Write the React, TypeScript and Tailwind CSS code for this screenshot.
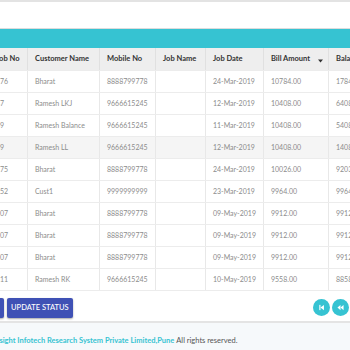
import React from 'react';

interface Row {
  jobNo: string;
  customer: string;
  mobile: string;
  jobName: string;
  jobDate: string;
  bill: string;
  balance: string;
}

const rows: Row[] = [
  { jobNo: '176', customer: 'Bharat', mobile: '8888799778', jobName: '', jobDate: '24-Mar-2019', bill: '10784.00', balance: '1784.00' },
  { jobNo: '47', customer: 'Ramesh LKJ', mobile: '9666615245', jobName: '', jobDate: '12-Mar-2019', bill: '10408.00', balance: '6408.00' },
  { jobNo: '49', customer: 'Ramesh Balance', mobile: '9666615245', jobName: '', jobDate: '11-Mar-2019', bill: '10408.00', balance: '5408.00' },
  { jobNo: '39', customer: 'Ramesh LL', mobile: '9666615245', jobName: '', jobDate: '12-Mar-2019', bill: '10408.00', balance: '1408.00' },
  { jobNo: '175', customer: 'Bharat', mobile: '8888799778', jobName: '', jobDate: '24-Mar-2019', bill: '10026.00', balance: '9203.00' },
  { jobNo: '152', customer: 'Cust1', mobile: '9999999999', jobName: '', jobDate: '23-Mar-2019', bill: '9964.00', balance: '9964.00' },
  { jobNo: '107', customer: 'Bharat', mobile: '8888799778', jobName: '', jobDate: '09-May-2019', bill: '9912.00', balance: '9912.00' },
  { jobNo: '107', customer: 'Bharat', mobile: '8888799778', jobName: '', jobDate: '09-May-2019', bill: '9912.00', balance: '9912.00' },
  { jobNo: '107', customer: 'Bharat', mobile: '8888799778', jobName: '', jobDate: '09-May-2019', bill: '9912.00', balance: '9912.00' },
  { jobNo: '111', customer: 'Ramesh RK', mobile: '9666615245', jobName: '', jobDate: '10-May-2019', bill: '9558.00', balance: '8858.00' },
];

const cols = 'grid grid-cols-[39px_72px_56px_50px_58px_65px_60px]';

const App: React.FC = () => {
  return (
    <div className="w-[350px] h-[350px] overflow-hidden bg-white font-['Lato',sans-serif] text-[7px] whitespace-nowrap">
      <div className="h-[2px] bg-[#e3e3e3]" />
      <div className="h-[26px] bg-white" />
      <div className="h-px bg-[#dcdcdc]" />
      <div className="h-[19px] bg-[#36c3d2]" />

      {/* table */}
      <div className="ml-[-11px] w-[400px]">
        <div className={`${cols} h-[22px] bg-[#eeeeee] text-[#333] font-bold text-[7.5px]`}>
          {['Job No', 'Customer Name', 'Mobile No', 'Job Name', 'Job Date', 'Bill Amount', 'Balance'].map((h, i) => (
            <div key={h} className="flex items-center pl-[7px] pr-[5px] border-r border-[#e0e0e0]">
              <span>{h}</span>
              {i === 5 && (
                <svg width="5" height="4" viewBox="0 0 5 4" className="ml-auto mt-[3px]">
                  <path d="M0 0.5 L5 0.5 L2.5 3.5 Z" fill="#333" />
                </svg>
              )}
            </div>
          ))}
        </div>
        {rows.map((r, idx) => (
          <div
            key={idx}
            className={`${cols} h-[22px] text-[#8c8c8c] border-t border-[#ececec] ${idx === 3 ? 'bg-[#f5f5f5]' : 'bg-white'}`}
          >
            {[r.jobNo, r.customer, r.mobile, r.jobName, r.jobDate, r.bill, r.balance].map((c, i) => (
              <div key={i} className="flex items-center px-[7px] border-r border-[#e8e8e8]">
                {c}
              </div>
            ))}
          </div>
        ))}
        <div className="h-px bg-[#ececec]" />
      </div>

      {/* actions */}
      <div className="flex items-center h-[30px] pt-[3px]">
        <div className="flex gap-[3px] ml-[-31px]">
          <button className="h-[20px] px-[6px] rounded-[2px] bg-[#3f51b5] text-white text-[7.5px] font-medium shadow-[0_1px_2px_rgba(0,0,0,0.35)]">
            CLOSE
          </button>
          <button className="h-[20px] px-[4px] rounded-[2px] bg-[#3f51b5] text-white text-[7.5px] font-medium shadow-[0_1px_2px_rgba(0,0,0,0.35)]">
            UPDATE STATUS
          </button>
        </div>
        <div className="ml-auto mr-[-18px] flex gap-[2px]">
          <span className="w-[17px] h-[17px] rounded-full bg-[#36c3d2] flex items-center justify-center">
            <svg width="7" height="7" viewBox="0 0 8 8">
              <rect x="1.5" y="1" width="1.3" height="6" fill="white" />
              <path d="M6.8 1 L2.8 4 L6.8 7 Z" fill="white" />
            </svg>
          </span>
          <span className="w-[17px] h-[17px] rounded-full bg-[#36c3d2] flex items-center justify-center">
            <svg width="7" height="7" viewBox="0 0 8 8">
              <path d="M4 1 L0.5 4 L4 7 Z" fill="white" />
              <path d="M7.5 1 L4 4 L7.5 7 Z" fill="white" />
            </svg>
          </span>
          <span className="w-[17px] h-[17px] rounded-full bg-[#36c3d2]" />
        </div>
      </div>

      {/* footer */}
      <div className="h-[2px] bg-[#e4e4e4]" />
      <div className="h-[30px] bg-[#f6f9fb] flex items-start pt-[12px] ml-[-7px] text-[7.5px]">
        <span className="font-bold text-[#36c3d2]">Insight Infotech Research System Private Limited,Pune</span>
        <span className="text-[#555] ml-[2px]">All rights reserved.</span>
      </div>
    </div>
  );
};

export default App;
